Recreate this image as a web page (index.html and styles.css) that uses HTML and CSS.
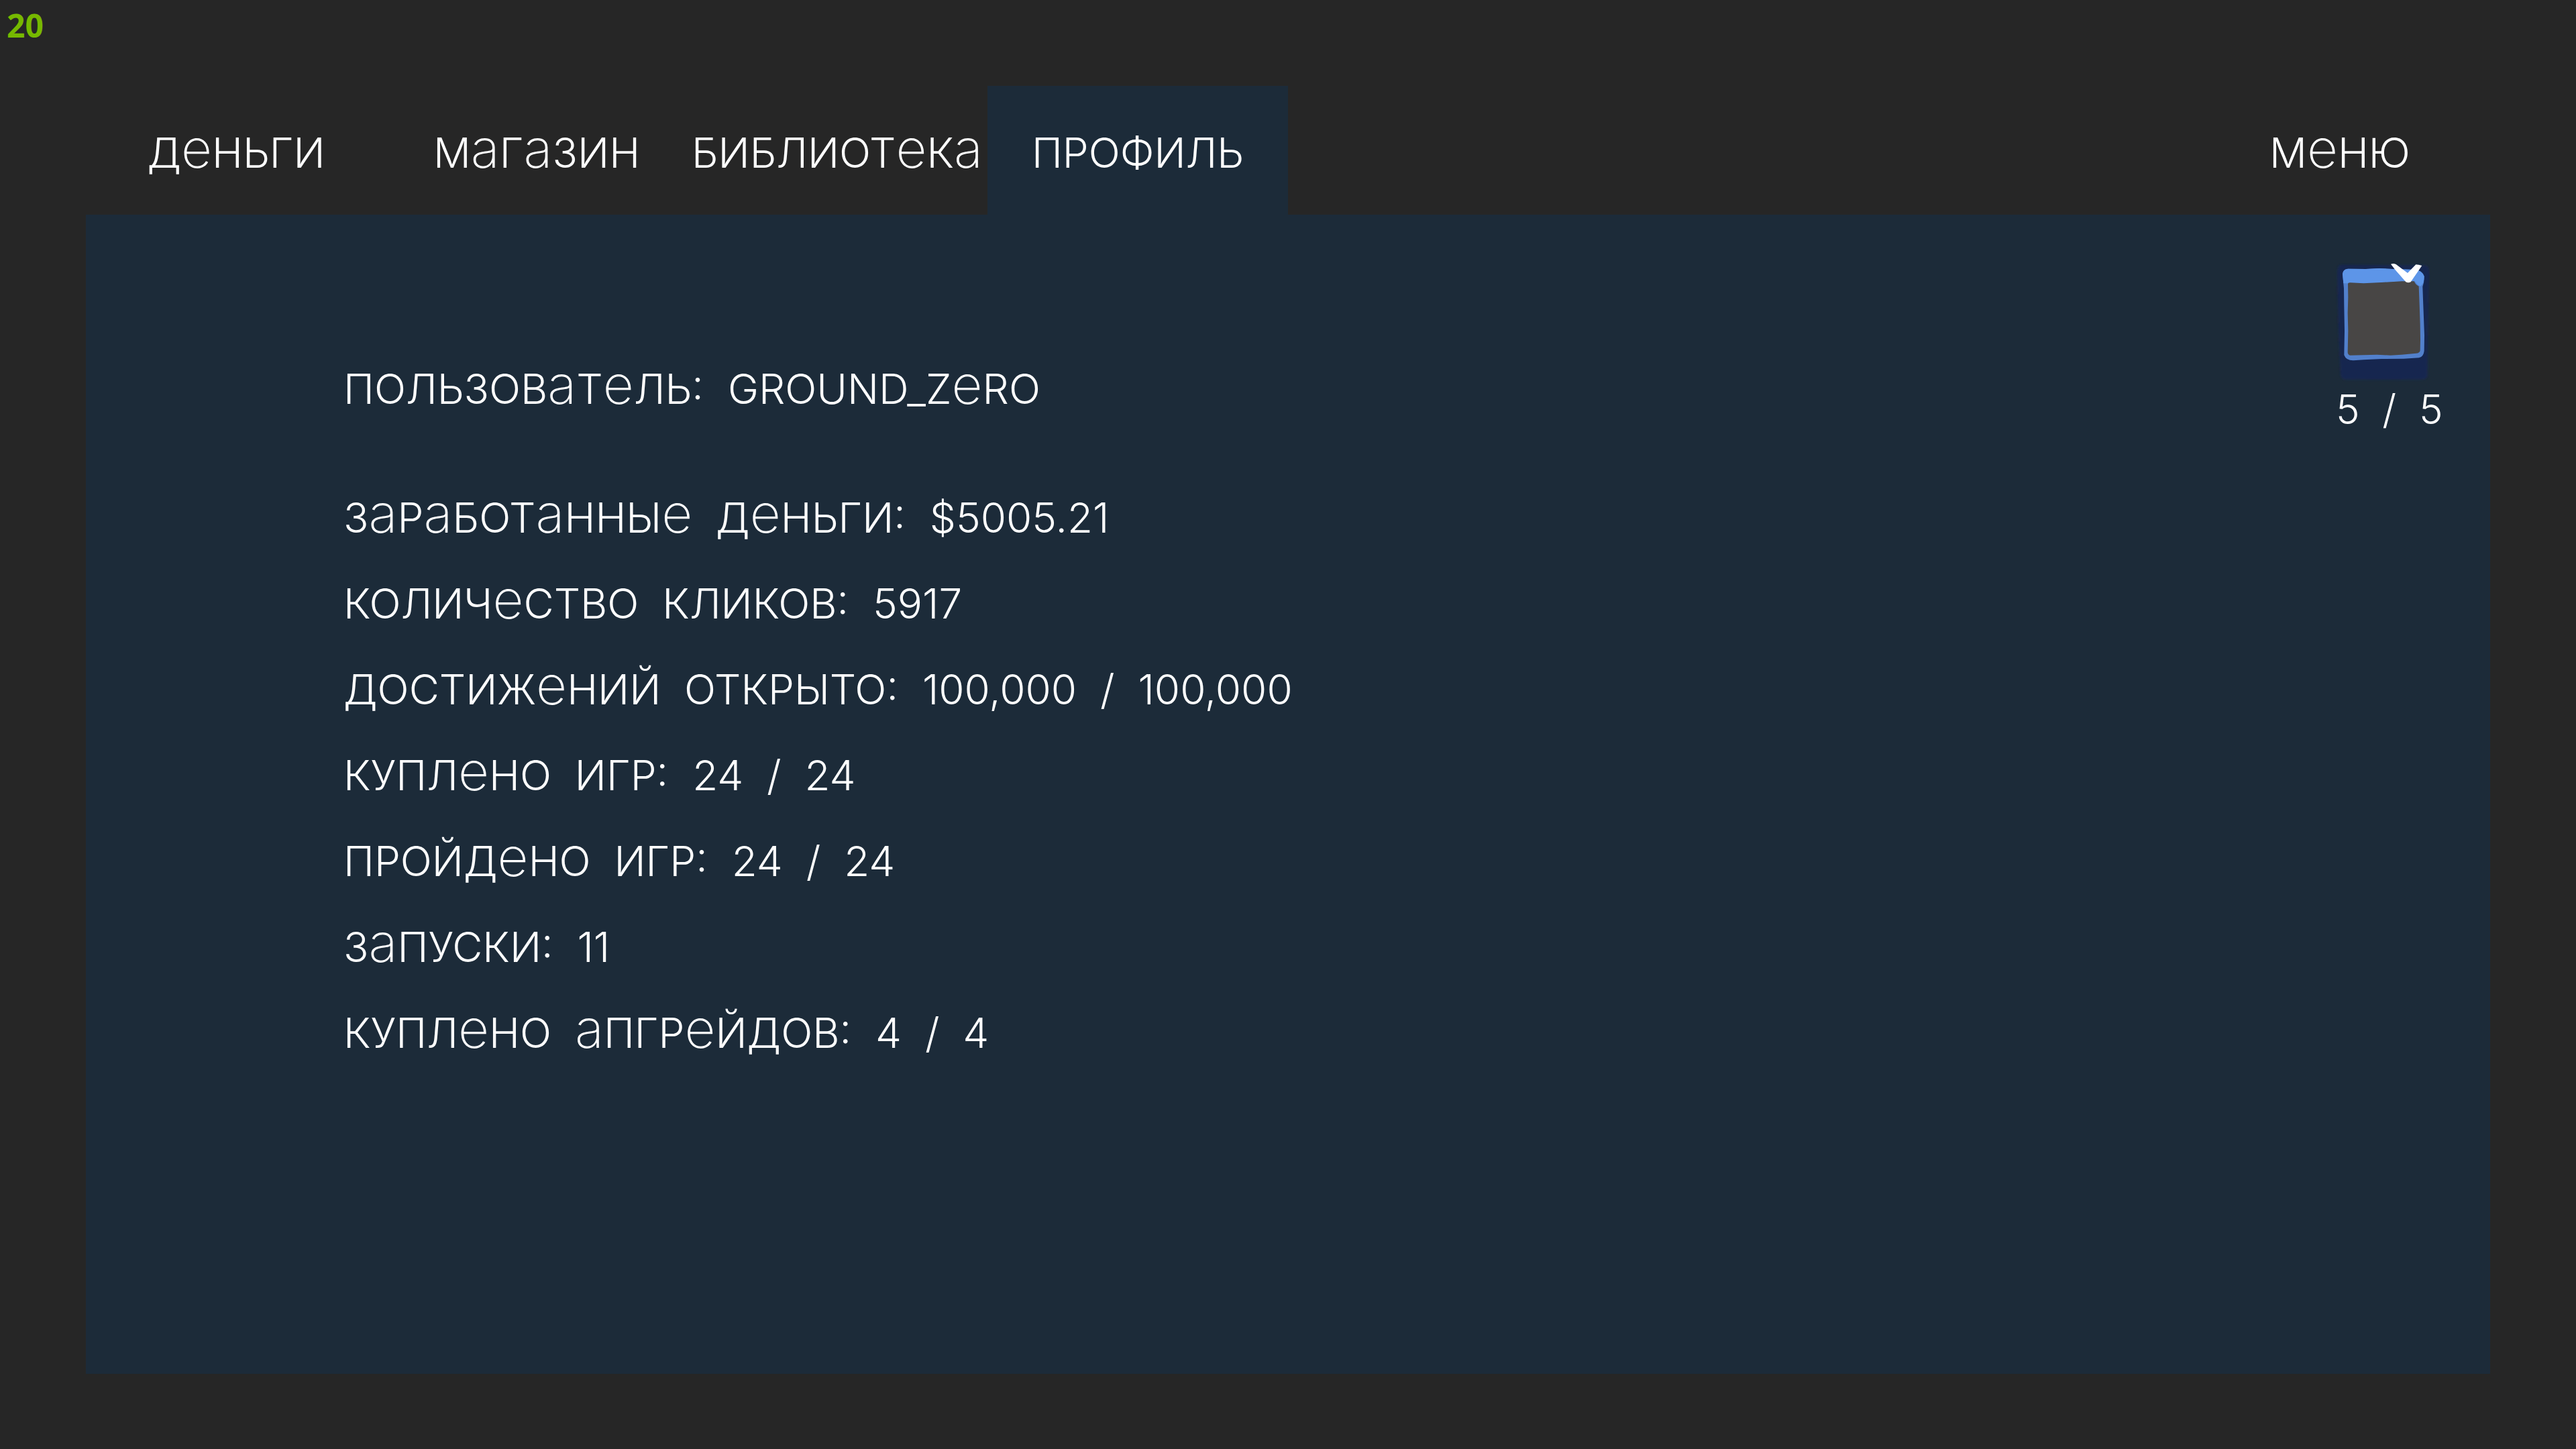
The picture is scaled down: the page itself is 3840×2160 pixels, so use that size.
FILE: index.html
```
<!DOCTYPE html>
<html lang="ru">

<head>
  <title>Профиль</title>
  <meta name="viewport" content="width=device-width, initial-scale=1" />
  <meta charset="UTF-8" />
  <link rel="stylesheet" href="styles.css">
</head>

<body>
  <div class="fps">20</div>

  <nav class="tabs">
    <button class="tab" type="button">деньги</button>
    <button class="tab" type="button">магазин</button>
    <button class="tab" type="button">библиотека</button>
    <button class="tab active" type="button">профиль</button>
    <button class="tab menu" type="button">меню</button>
  </nav>

  <main class="panel">
    <dl class="stats">
      <div class="row user"><dt>пользователь:</dt><dd>Ground_Zero</dd></div>
      <div class="row"><dt>заработанные  деньги:</dt><dd>$5005.21</dd></div>
      <div class="row"><dt>количество  кликов:</dt><dd>5917</dd></div>
      <div class="row"><dt>достижений  открыто:</dt><dd>100,000  /  100,000</dd></div>
      <div class="row"><dt>куплено  игр:</dt><dd>24  /  24</dd></div>
      <div class="row"><dt>пройдено  игр:</dt><dd>24  /  24</dd></div>
      <div class="row"><dt>запуски:</dt><dd>11</dd></div>
      <div class="row"><dt>куплено  апгрейдов:</dt><dd>4  /  4</dd></div>
    </dl>

    <div class="badge">
      <svg class="badge-icon" viewBox="126 90 420 540" aria-hidden="true">
        <defs>
          <filter id="soft" x="-10%" y="-10%" width="120%" height="120%">
            <feGaussianBlur stdDeviation="4" />
          </filter>
        </defs>
        <path fill="#172650" filter="url(#soft)" d="M150 104 L525 106 Q544 112 544 135 L538 400 L536 600 Q532 616 515 617 L340 618 L165 617 Q148 614 147 595 L138 400 L132 140 Q132 106 150 104 Z" />
        <path fill="#5280cc" d="M156 145 Q158 124 180 122 L260 123 L320 120 L380 123 L480 126 Q512 130 521 155 Q522 182 514 202 L516 260 L519 340 L522 420 L521 490 Q518 516 498 520 L430 524 L330 525 L250 529 L205 532 Q172 533 163 508 L165 400 L163 290 L162 210 Z" />
        <path fill="#5d95e8" d="M156 145 Q158 124 180 122 L260 123 L320 120 L380 123 L480 126 Q512 130 521 155 Q521 188 505 200 Q490 198 480 178 L380 181 L260 188 L160 187 Z" />
        <path fill="#484645" d="M180 190 Q180 184 190 184 L250 187 L330 183 L420 178 L476 178 Q484 196 497 200 L500 280 L503 370 L504 440 L503 488 Q500 499 485 500 L420 506 L370 509 L310 506 L250 508 L190 509 Q180 508 179 496 L181 400 L179 320 L181 250 Z" />
        <path fill="#fff" d="M372 101 Q384 96 395 102 L447 141 L484 103 Q496 104 511 108 L461 181 Q450 187 439 181 L391 126 Z" />
      </svg>
      <span class="badge-count">5  /  5</span>
    </div>
  </main>

  <script>
    // unicase lettering: capitals everywhere, but а and е keep their small form at full cap height
    document.querySelectorAll(".tab, .row dt, .row dd").forEach((el) => {
      el.innerHTML = el.textContent.replace(/[аеe]/g, '<span class="tall">$&</span>');
    });
  </script>
</body>

</html>
```
FILE: styles.css
```
* {
  box-sizing: border-box;
}

body {
  margin: 0;
  min-height: 100vh;
  padding: 128px 128px 112px;
  display: flex;
  flex-direction: column;
  background-color: #262626;
  color: #fff;
  font-family: Inter, sans-serif;
  font-size: 62px;
  font-weight: 350;
}

.fps {
  position: absolute;
  top: 8px;
  left: 10px;
  color: #76b900;
  font-family: "Noto Sans", sans-serif;
  font-size: 48px;
  font-weight: 700;
  line-height: 60px;
}

.tall {
  font-size: 80px;
  font-weight: 250;
  line-height: 0;
  text-transform: none;
}

.tabs {
  display: flex;
}

.tab {
  width: 12.5%;
  height: 192px;
  padding: 8px 0 0;
  border: 0;
  background: none;
  color: inherit;
  font: inherit;
  line-height: 72px;
  text-align: center;
  text-transform: uppercase;
  white-space: nowrap;
  cursor: pointer;
}

.active {
  background-color: #1c2b39;
}

.menu {
  margin-left: auto;
}

.panel {
  flex: 1;
  display: flex;
  justify-content: space-between;
  align-items: flex-start;
  padding: 70px 72px 0 384px;
  background-color: #1c2b39;
}

.stats {
  margin: 122px 0 0;
  text-transform: uppercase;
}

.row {
  display: flex;
  align-items: baseline;
  gap: 36px;
  height: 128px;
  line-height: 136px;
  white-space: pre;
}

.user {
  height: 192px;
}

.row dd {
  margin: 0;
}

.badge {
  width: 158px;
  display: flex;
  flex-direction: column;
}

.badge-icon {
  width: 140px;
  height: 180px;
}

.badge-count {
  font-size: 60px;
  line-height: 80px;
  text-align: center;
  white-space: pre;
}
```
